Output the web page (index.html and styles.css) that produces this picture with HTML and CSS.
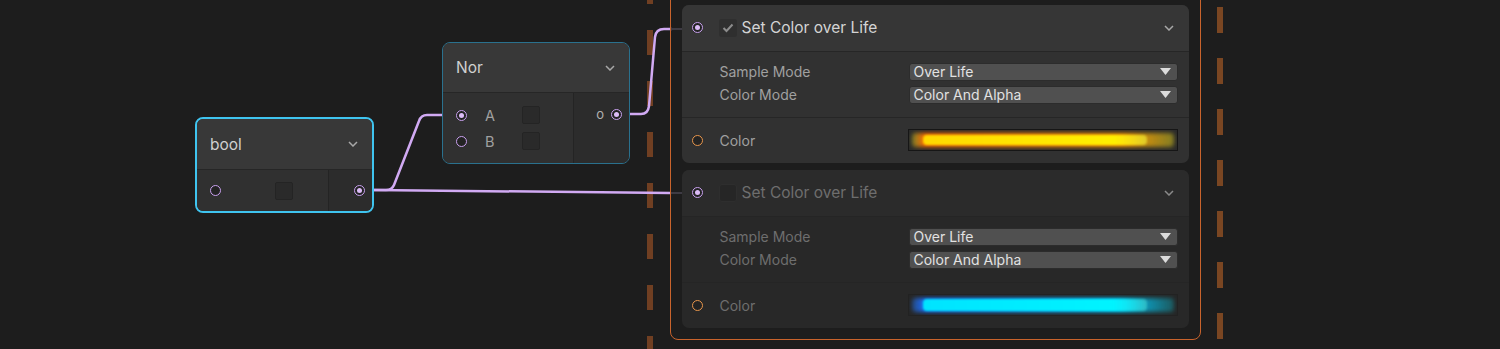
FILE: index.html
```html
<!DOCTYPE html>
<html lang="en">
<head>
  <meta charset="UTF-8">
  <title>Graph</title>
  <link rel="stylesheet" href="styles.css">
</head>
<body>
  <div class="canvas">

    <div class="dash dash-left"></div>
    <div class="dash dash-right"></div>

    <svg class="wires" width="1500" height="349" viewBox="0 0 1500 349">
      <path d="M373 190 H386 Q392 190 394 185 L419 121 Q421 115 427 115 H457" />
      <path d="M373 190 L670 193" />
      <path d="M622 114 H641 Q648 114 649 106 L655 37 Q656 29 664 29 H671" />
      <path class="stub" d="M671 29 H692" />
      <path class="stub" d="M671 193 H692" />
    </svg>

    <!-- bool node -->
    <div class="node node-bool">
      <div class="node-head">
        <span>bool</span>
        <svg class="chev" width="10" height="6" viewBox="0 0 10 6"><polyline points="1,1 5,5 9,1" /></svg>
      </div>
      <div class="node-body">
        <div class="node-in">
          <span class="port"></span>
          <span class="box bool-box"></span>
        </div>
        <div class="node-out">
          <span class="port on"></span>
        </div>
      </div>
    </div>

    <!-- nor node -->
    <div class="node node-nor">
      <div class="node-head">
        <span>Nor</span>
        <svg class="chev" width="10" height="6" viewBox="0 0 10 6"><polyline points="1,1 5,5 9,1" /></svg>
      </div>
      <div class="node-body">
        <div class="node-in nor-in">
          <div class="in-row"><span class="port on"></span><span class="pin">A</span><span class="box"></span></div>
          <div class="in-row"><span class="port"></span><span class="pin">B</span><span class="box"></span></div>
        </div>
        <div class="node-out nor-out">
          <span class="pin-o">o</span>
          <span class="port on"></span>
        </div>
      </div>
    </div>

    <!-- context -->
    <div class="context">

      <div class="block">
        <div class="block-head">
          <span class="port on"></span>
          <span class="check">
            <svg width="12" height="10" viewBox="0 0 12 10"><polyline points="1.5,5 4.5,8 10.5,1.5" /></svg>
          </span>
          <span class="title">Set Color over Life</span>
          <svg class="chev" width="10" height="6" viewBox="0 0 10 6"><polyline points="1,1 5,5 9,1" /></svg>
        </div>
        <div class="block-fields">
          <div class="field">
            <span class="label">Sample Mode</span>
            <div class="select"><span>Over Life</span><svg width="11" height="7" viewBox="0 0 11 7"><polygon points="0,0 11,0 5.5,7" /></svg></div>
          </div>
          <div class="field">
            <span class="label">Color Mode</span>
            <div class="select"><span>Color And Alpha</span><svg width="11" height="7" viewBox="0 0 11 7"><polygon points="0,0 11,0 5.5,7" /></svg></div>
          </div>
        </div>
        <div class="block-color">
          <span class="port orange"></span>
          <span class="label">Color</span>
          <div class="gradient warm"><div class="glow"></div><div class="core"></div></div>
        </div>
      </div>

      <div class="block off">
        <div class="block-head">
          <span class="port on"></span>
          <span class="check"></span>
          <span class="title">Set Color over Life</span>
          <svg class="chev" width="10" height="6" viewBox="0 0 10 6"><polyline points="1,1 5,5 9,1" /></svg>
        </div>
        <div class="block-fields">
          <div class="field">
            <span class="label">Sample Mode</span>
            <div class="select"><span>Over Life</span><svg width="11" height="7" viewBox="0 0 11 7"><polygon points="0,0 11,0 5.5,7" /></svg></div>
          </div>
          <div class="field">
            <span class="label">Color Mode</span>
            <div class="select"><span>Color And Alpha</span><svg width="11" height="7" viewBox="0 0 11 7"><polygon points="0,0 11,0 5.5,7" /></svg></div>
          </div>
        </div>
        <div class="block-color">
          <span class="port orange"></span>
          <span class="label">Color</span>
          <div class="gradient cold"><div class="glow"></div><div class="core"></div></div>
        </div>
      </div>

    </div>
  </div>
</body>
</html>
```

FILE: styles.css
```css
body {
  margin: 0;
  background-color: #1d1d1d;
  font-family: Inter, 'Noto Sans', sans-serif;
  color: #d2d2d2;
}

.canvas {
  position: relative;
  width: 1500px;
  height: 349px;
  overflow: hidden;
}

/* dashed system lines */
.dash {
  position: absolute;
  top: -21px;
  width: 6px;
  height: 400px;
}

.dash-left {
  left: 647px;
  background: repeating-linear-gradient(to bottom, #703f22 0 25px, transparent 25px 51px);
}

.dash-right {
  left: 1217px;
  top: 7px;
  background: repeating-linear-gradient(to bottom, #7a4622 0 26px, transparent 26px 51px);
}

.wires {
  position: absolute;
  left: 0;
  top: 0;
}

.wires path {
  fill: none;
  stroke: #d1aaf3;
  stroke-width: 2.5;
  stroke-linecap: round;
}

.wires .stub {
  stroke: #3e3b44;
  stroke-width: 2;
}

/* ports */
.port {
  box-sizing: border-box;
  width: 11px;
  height: 11px;
  border-radius: 50%;
  border: 1.8px solid #c9a1ef;
  background-color: #232323;
  display: flex;
  align-items: center;
  justify-content: center;
  flex: none;
}

.port.on::after {
  content: '';
  width: 5px;
  height: 5px;
  border-radius: 50%;
  background-color: #dcbcf7;
}

.port.orange {
  border-color: #e8964c;
}

.chev polyline {
  fill: none;
  stroke: #a8a8a8;
  stroke-width: 1.5;
}

/* nodes */
.node {
  position: absolute;
  box-sizing: border-box;
  display: flex;
  flex-direction: column;
  border-radius: 8px;
  overflow: hidden;
  background-color: #303030;
}

.node-bool {
  left: 195px;
  top: 117px;
  width: 179px;
  height: 96px;
  border: 2px solid #3fc4ef;
}

.node-nor {
  left: 442px;
  top: 42px;
  width: 188px;
  height: 122px;
  border: 1.5px solid #2a718e;
}

.node-head {
  display: flex;
  align-items: center;
  justify-content: space-between;
  padding: 0 14px 0 13px;
  background-color: #383838;
  border-bottom: 1px solid #262626;
  font-size: 15.5px;
  color: #d0d0d0;
}

.node-bool .node-head {
  height: 50px;
}

.node-nor .node-head {
  height: 49px;
}

.node-body {
  flex: 1;
  display: flex;
}

.node-in {
  flex: 1;
  display: flex;
  align-items: center;
  background-color: #303030;
  border-right: 1px solid #242424;
  padding-left: 13px;
}

.node-out {
  display: flex;
  align-items: center;
  justify-content: flex-end;
  background-color: #2c2c2c;
  padding-right: 7px;
}

.node-bool .node-out {
  width: 36px;
}

.box {
  box-sizing: border-box;
  width: 18px;
  height: 18px;
  border-radius: 2px;
  background-color: #2a2a2a;
  border: 1px solid #242424;
}

.bool-box {
  margin-left: 54px;
}

.nor-in {
  flex-direction: column;
  align-items: flex-start;
  justify-content: center;
  gap: 8px;
}

.in-row {
  display: flex;
  align-items: center;
  height: 18px;
}

.pin {
  width: 55px;
  padding-left: 18px;
  box-sizing: border-box;
  font-size: 14.5px;
  color: #a0a0a0;
}

.nor-out {
  width: 55px;
  padding-right: 7px;
  align-items: flex-start;
  padding-top: 16px;
  gap: 7px;
  box-sizing: border-box;
}

.pin-o {
  font-size: 13px;
  color: #b0b0b0;
  line-height: 10px;
}

/* context */
.context {
  position: absolute;
  left: 670px;
  top: -15px;
  width: 531px;
  height: 355px;
  box-sizing: border-box;
  border: 1.5px solid #c8632c;
  border-radius: 8px;
  padding: 18.5px 11.5px 0 10.5px;
  display: flex;
  flex-direction: column;
  gap: 7px;
}

.block {
  height: 158px;
  border-radius: 7px;
  overflow: hidden;
  display: flex;
  flex-direction: column;
  background-color: #313131;
}

.block-head {
  height: 46px;
  display: flex;
  align-items: center;
  padding: 0 15px 0 10px;
  background-color: #363636;
  border-bottom: 1.5px solid #262626;
}

.check {
  box-sizing: border-box;
  width: 18px;
  height: 18px;
  margin-left: 16px;
  border-radius: 3px;
  background-color: #2f2f2f;
  display: flex;
  align-items: center;
  justify-content: center;
}

.check polyline {
  fill: none;
  stroke: #8c8c8c;
  stroke-width: 2;
}

.title {
  flex: 1;
  margin-left: 5px;
  font-size: 15.5px;
  color: #d4d4d4;
}

.block-fields {
  height: 66px;
  box-sizing: border-box;
  padding: 11px 11px 0 38px;
  display: flex;
  flex-direction: column;
  gap: 5px;
  border-bottom: 1.5px solid #262626;
}

.field {
  display: flex;
  align-items: center;
  height: 18px;
}

.label {
  font-size: 14px;
  color: #a0a0a0;
}

.field .label {
  width: 189px;
}

.select {
  flex: 1;
  height: 18px;
  display: flex;
  align-items: center;
  justify-content: space-between;
  padding: 0 6px 0 4px;
  border-radius: 3px;
  background-color: #505050;
  border: 1px solid #2c2c2c;
  box-sizing: border-box;
  font-size: 14px;
  color: #e2e2e2;
}

.select polygon {
  fill: #dcdcdc;
}

.block-color {
  flex: 1;
  display: flex;
  align-items: center;
  padding: 0 10px 0 10px;
}

.block-color .label {
  width: 188px;
  margin-left: 17px;
}

.gradient {
  position: relative;
  width: 270px;
  height: 22px;
  box-sizing: border-box;
  border: 1px solid #161616;
  background-color: #2a2a2a;
  overflow: hidden;
}

.gradient .glow,
.gradient .core {
  position: absolute;
  border-radius: 4px;
}

.gradient .glow {
  left: 3px;
  right: 3px;
  top: 3px;
  bottom: 3px;
  filter: blur(2px);
}

.gradient .core {
  left: 14px;
  right: 30px;
  top: 5px;
  bottom: 5px;
  filter: blur(1.2px);
}

.warm .glow {
  background: linear-gradient(to right, rgba(140, 150, 40, 0.8), #ff6a00 5%, #ff9a00 80%, rgba(190, 180, 30, 0.6) 100%);
}

.warm .core {
  background: linear-gradient(to right, #ffd800, #fff000 85%, rgba(240, 240, 60, 0.6));
}

.cold .glow {
  background: linear-gradient(to right, rgba(40, 90, 160, 0.7), #1a6cff 5%, #00c8ff 80%, rgba(20, 140, 150, 0.5) 100%);
}

.cold .core {
  top: 4px;
  bottom: 4px;
  background: linear-gradient(to right, #00e4ff, #00f4ff 85%, rgba(80, 220, 210, 0.5));
}

/* disabled block */
.block.off {
  background-color: #282828;
}

.block.off .block-head {
  background-color: #2b2b2b;
  border-bottom-color: #252525;
}

.block.off .block-fields {
  border-bottom-color: #252525;
}

.block.off .check {
  background-color: #262626;
  border: 1px solid #2e2e2e;
}

.block.off .title,
.block.off .label {
  color: #6e6e6e;
}

.block.off .chev polyline {
  stroke: #8a8a8a;
}

.block.off .gradient {
  border-color: #222;
  background-color: #262626;
}
```
